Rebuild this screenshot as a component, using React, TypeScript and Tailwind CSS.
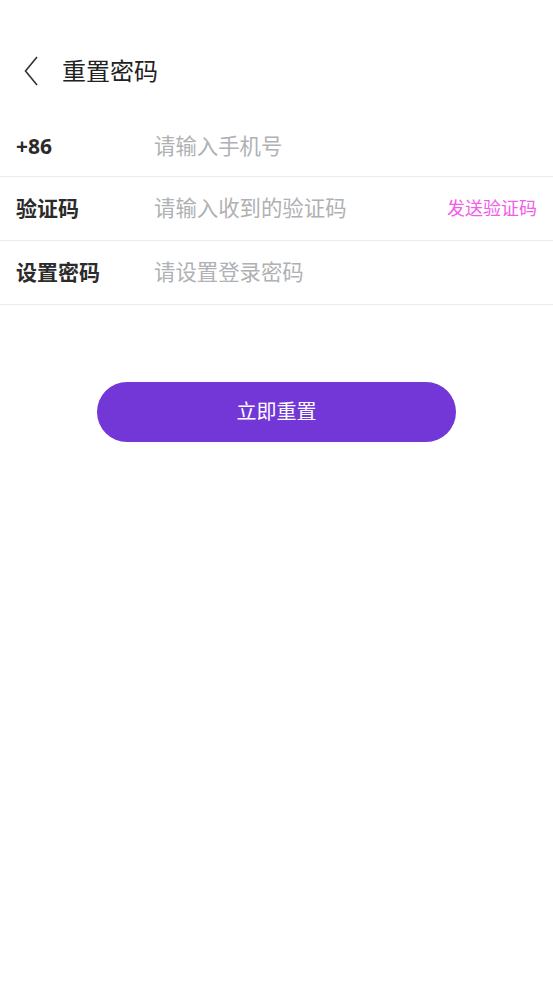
import React from "react";

const font = { fontFamily: '"Noto Sans", "Noto Sans CJK SC", sans-serif' };

function Row({ label, placeholder, action, h }: { label: string; placeholder: string; action?: string; h: string }) {
  return (
    <div className={`flex items-center border-b border-[#ebebeb] ${h}`}>
      <div className="w-[154px] pl-4 text-[21px] font-bold text-[#2b2b2b]">{label}</div>
      <div className="flex-1 text-[21.4px] text-[#afb1b4]">{placeholder}</div>
      {action && <div className="pr-4 text-[18px] text-[#f15ee8]">{action}</div>}
    </div>
  );
}

export default function App() {
  return (
    <div className="min-h-[983px] w-[553px] bg-white" style={font}>
      <div className="flex h-[142px] items-center">
        <div className="flex items-center pl-[24px]">
          <svg width="14" height="30" viewBox="0 0 14 30">
            <path d="M13 1 L1.5 15 L13 29" fill="none" stroke="#333" strokeWidth="1.6" />
          </svg>
          <span className="ml-[24px] text-[24px] text-[#222]">重置密码</span>
        </div>
      </div>
      <div className="-mt-[29px]">
        <Row label="+86" placeholder="请输入手机号" h="h-[64px] pt-[4px]" />
        <Row label="验证码" placeholder="请输入收到的验证码" action="发送验证码" h="h-[64px]" />
        <Row label="设置密码" placeholder="请设置登录密码" h="h-[64px]" />
      </div>
      <div className="flex justify-center pt-[77px]">
        <button className="h-[60px] w-[359px] rounded-full bg-[#7337d8] text-[20px] text-white">立即重置</button>
      </div>
    </div>
  );
}
